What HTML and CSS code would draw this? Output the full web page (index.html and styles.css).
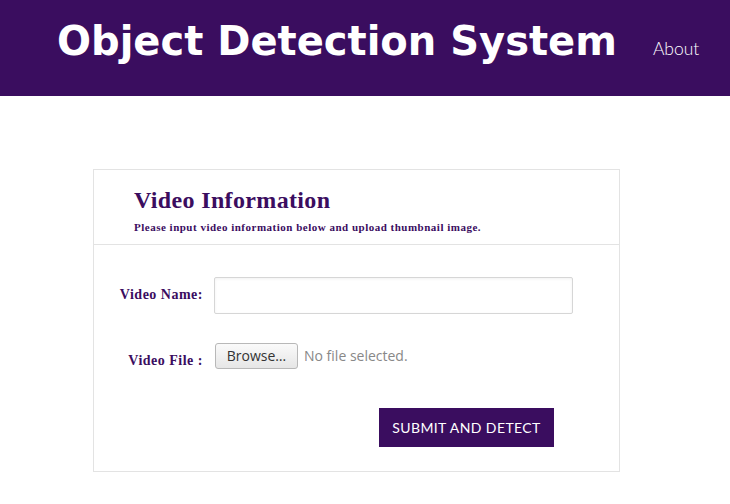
FILE: index.html
```html
<!DOCTYPE html>
<html>
<head>
<meta charset="utf-8">
<link rel="stylesheet" href="styles.css">
</head>
<body>
<header class="topbar">
  <h1 class="brand">Object Detection System</h1>
  <a class="nav-link" href="#">About</a>
</header>
<main class="main">
  <section class="card">
    <div class="card-head">
      <h2 class="card-title">Video Information</h2>
      <p class="card-sub">Please input video information below and upload thumbnail image.</p>
    </div>
    <form class="form">
      <div class="row row-name">
        <label class="label">Video Name:</label>
        <input class="text-input" type="text">
      </div>
      <div class="row row-file">
        <label class="label">Video File :</label>
        <div class="file">
          <button type="button" class="browse">Browse…</button>
          <span class="file-status">No file selected.</span>
        </div>
      </div>
      <div class="row row-submit">
        <span></span>
        <button type="button" class="submit">SUBMIT AND DETECT</button>
      </div>
    </form>
  </section>
</main>
</body>
</html>
```
FILE: styles.css
```css
* { box-sizing: border-box; }
body { margin: 0; background: #fff; font-family: "Liberation Serif", serif; }
.topbar {
  height: 96px;
  background: #3a0d5f;
  display: flex;
  align-items: center;
  padding-left: 57px;
}
.brand {
  margin: 0;
  font-family: "DejaVu Sans", sans-serif;
  font-weight: bold;
  font-size: 40px;
  color: #fff;
  line-height: 1;
  position: relative;
  top: -7px;
}
.nav-link {
  margin-left: 36px;
  font-family: Lato, sans-serif;
  font-weight: 300;
  font-size: 17.5px;
  color: #fff;
  text-decoration: none;
  position: relative;
  top: 0;
}
.main { padding-top: 73px; padding-left: 93px; }
.card {
  width: 527px;
  border: 1px solid #e3e3e3;
}
.card-head {
  height: 75px;
  border-bottom: 1px solid #e3e3e3;
  padding: 17px 0 0 40px;
  color: #3b0d5f;
}
.card-title { margin: 0; font-size: 24px; font-weight: bold; line-height: 26px; letter-spacing: 0.35px; }
.card-sub { margin: 8px 0 0; font-size: 11px; font-weight: bold; line-height: 13px; letter-spacing: 0.5px; }
.form { padding: 32px 0 24px; }
.row {
  display: grid;
  grid-template-columns: 109px 359px;
  column-gap: 11px;
  align-items: center;
}
.label {
  text-align: right;
  font-weight: bold;
  font-size: 14px;
  letter-spacing: 0.5px;
  color: #3b0d5f;
  position: relative;
  top: -1px;
}
.text-input {
  height: 37px;
  border: 1px solid #d6d6d6;
  border-radius: 2px;
  box-shadow: inset 0 1px 3px rgba(0,0,0,0.06);
  background: #fff;
  margin: 0;
}
.row-file { margin-top: 23px; height: 37px; }
.row-file .label { top: 5px; }
.file { display: flex; align-items: center; gap: 6px; padding-left: 1px; }
.browse {
  width: 83px;
  height: 26px;
  border: 1px solid #b8b8b8;
  border-radius: 3px;
  background: linear-gradient(#fafafa, #e6e6e6);
  font-family: "Open Sans", "DejaVu Sans", sans-serif;
  font-size: 14px;
  color: #333;
  padding: 0;
}
.file-status {
  font-family: "Open Sans", "DejaVu Sans", sans-serif;
  font-size: 14px;
  color: #888;
}
.row-submit { margin-top: 34px; }
.submit {
  margin-left: 165px;
  width: 175px;
  height: 39px;
  border: none;
  background: #3a0d5f;
  color: #fff;
  font-family: Lato, sans-serif;
  font-size: 14px;
  letter-spacing: 0.4px;
  padding: 0;
}
```
